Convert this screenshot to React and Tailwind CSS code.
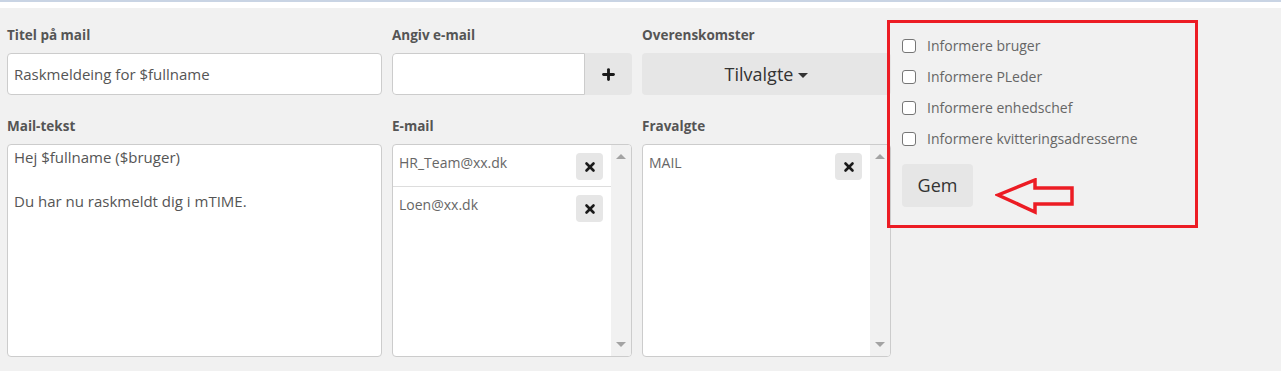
import { Plus, X } from 'lucide-react';

const font = { fontFamily: '"Open Sans", "Noto Sans", sans-serif' };

function Label({ children }) {
  return <div className="h-[18px] text-[13.5px] font-bold leading-[18px] text-[#555] mb-[9px]">{children}</div>;
}

function RemoveBtn() {
  return (
    <button className="w-[27px] h-[27px] rounded bg-[#e6e6e6] flex items-center justify-center shrink-0">
      <X size={14} strokeWidth={4.5} className="text-[#1a1a1a]" />
    </button>
  );
}

function ScrollList({ items }) {
  return (
    <div className="h-[213px] flex bg-white border border-[#ccc] rounded overflow-hidden">
      <div className="flex-1 flex flex-col">
        {items.map((it, i) => (
          <div key={i} className="h-[42px] flex items-start justify-between pl-[6px] pr-[8px] pt-[8px] border-b border-[#ddd] last:border-b-0">
            <span className="text-[14px] leading-[18px] text-[#666] pt-[1px]">{it}</span>
            <RemoveBtn />
          </div>
        ))}
      </div>
      <div className="w-[20px] bg-[#f1f1f1] flex flex-col items-center justify-between py-[9px]">
        <div className="w-0 h-0 border-l-[5px] border-r-[5px] border-b-[5px] border-l-transparent border-r-transparent border-b-[#a3a3a3]" />
        <div className="w-0 h-0 border-l-[5px] border-r-[5px] border-t-[5px] border-l-transparent border-r-transparent border-t-[#a3a3a3]" />
      </div>
    </div>
  );
}

function Check({ label }) {
  return (
    <label className="flex items-center h-[31px]">
      <span className="w-[14px] h-[14px] border border-[#767676] rounded-[3px] bg-white mr-[11px]" />
      <span className="text-[14px] text-[#666]">{label}</span>
    </label>
  );
}

export default function App() {
  return (
    <div style={font} className="w-[1281px] h-[371px] bg-[#f1f1f1] overflow-hidden">
      <div className="h-[2px] bg-[#c9d4e4]" />
      <div className="h-[6px] bg-white" />
      <div className="flex pl-[7px]">
        <div className="flex gap-[10px] pt-[18px]">
          <div className="w-[375px]">
            <Label>Titel på mail</Label>
            <div className="h-[42px] bg-white border border-[#ccc] rounded flex items-center px-[6px] text-[15px] text-[#555]">
              Raskmeldeing for $fullname
            </div>
            <div className="mt-[22px]">
              <Label>Mail-tekst</Label>
              <div className="h-[213px] bg-white border border-[#ccc] rounded px-[6px] pt-[1px] text-[15px] leading-[22px] text-[#555]">
                <div>Hej $fullname ($bruger)</div>
                <div>&nbsp;</div>
                <div>Du har nu raskmeldt dig i mTIME.</div>
              </div>
            </div>
          </div>
          <div className="w-[240px]">
            <Label>Angiv e-mail</Label>
            <div className="h-[42px] flex rounded overflow-hidden">
              <div className="flex-1 bg-white border border-[#ccc] rounded-l" />
              <div className="w-[47px] bg-[#e6e6e6] flex items-center justify-center">
                <Plus size={17} strokeWidth={4} className="text-[#1a1a1a]" />
              </div>
            </div>
            <div className="mt-[22px]">
              <Label>E-mail</Label>
              <ScrollList items={['HR_Team@xx.dk', 'Loen@xx.dk']} />
            </div>
          </div>
          <div className="w-[249px]">
            <Label>Overenskomster</Label>
            <div className="h-[42px] bg-[#e6e6e6] rounded flex items-center justify-center text-[18px] text-[#333]">
              Tilvalgte
              <span className="ml-[5px] mt-[2px] w-0 h-0 border-l-[5px] border-r-[5px] border-t-[5px] border-l-transparent border-r-transparent border-t-[#333]" />
            </div>
            <div className="mt-[22px]">
              <Label>Fravalgte</Label>
              <ScrollList items={['MAIL']} />
            </div>
          </div>
        </div>
        <div className="relative -ml-[4px] mt-[12px] w-[311px] h-[208px] border-[3px] border-[#ec1c24] pl-[12px] pt-[7px]">
          <Check label="Informere bruger" />
          <Check label="Informere PLeder" />
          <Check label="Informere enhedschef" />
          <Check label="Informere kvitteringsadresserne" />
          <button className="mt-[10px] w-[71px] h-[43px] bg-[#e6e6e6] rounded text-[18px] text-[#333]">Gem</button>
          <svg className="absolute left-[105px] top-[155px]" width="80" height="40" viewBox="0 0 80 40">
            <polygon points="3,17 40,2 40,10 77,10 77,26 40,26 40,34" fill="none" stroke="#ec1c24" strokeWidth="3.5" strokeLinejoin="miter" />
          </svg>
        </div>
      </div>
    </div>
  );
}
